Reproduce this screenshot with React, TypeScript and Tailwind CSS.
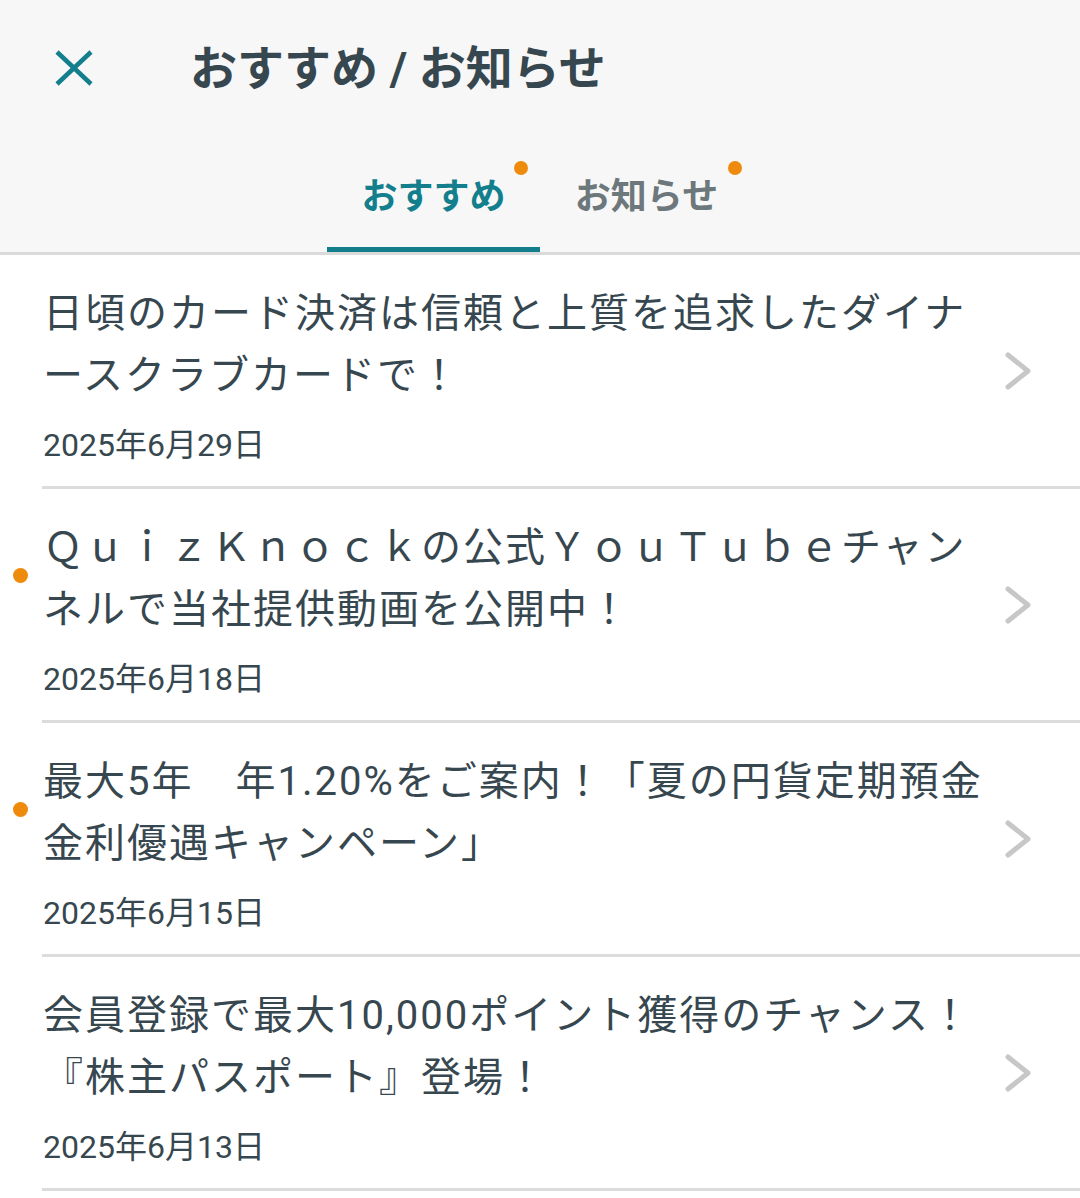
import React from "react";

const FONT = 'Roboto, "Noto Sans CJK JP", "Noto Sans", sans-serif';

type Item = { title: string; date: string; dot: boolean };

const items: Item[] = [
  { title: "日頃のカード決済は信頼と上質を追求したダイナースクラブカードで！", date: "2025年6月29日", dot: false },
  { title: "ＱｕｉｚＫｎｏｃｋの公式ＹｏｕＴｕｂｅチャンネルで当社提供動画を公開中！", date: "2025年6月18日", dot: true },
  { title: "最大5年　年1.20%をご案内！「夏の円貨定期預金金利優遇キャンペーン」", date: "2025年6月15日", dot: true },
  { title: "会員登録で最大10,000ポイント獲得のチャンス！『株主パスポート』登場！", date: "2025年6月13日", dot: false },
];

function Chevron() {
  return (
    <svg width="28" height="40" viewBox="0 0 28 40" className="shrink-0">
      <path d="M4 4 L24 20 L4 36" fill="none" stroke="#c7c7c7" strokeWidth="5" strokeLinecap="round" strokeLinejoin="round" />
    </svg>
  );
}

export default function App() {
  return (
    <div className="w-[1080px] min-h-[1198px] bg-white text-[#37474f]" style={{ fontFamily: FONT }}>
      <header className="bg-[#f7f7f7] border-b-[3px] border-[#dadada]">
        <div className="h-[136px] flex items-center">
          <div className="pl-[55px] w-[190px]">
            <svg width="38" height="36" viewBox="0 0 38 36">
              <path d="M2 2 L36 34 M36 2 L2 34" stroke="#137f8d" strokeWidth="4.5" fill="none" />
            </svg>
          </div>
          <h1 className="text-[47px] font-bold leading-none text-[#37474f]">おすすめ / お知らせ</h1>
        </div>
        <div className="flex justify-center h-[116px]">
          <div className="w-[213px] relative flex justify-center pt-[36px]">
            <span className="relative text-[36px] leading-[50px] font-bold text-[#137f8d] h-[50px]">
              おすすめ
              <span className="absolute -right-[22px] -top-[11px] w-[14px] h-[14px] rounded-full bg-[#ef8b0c]" />
            </span>
            <div className="absolute left-0 right-0 bottom-0 h-[5px] bg-[#137f8d]" />
          </div>
          <div className="w-[213px] relative flex justify-center pt-[36px]">
            <span className="relative text-[36px] leading-[50px] font-bold text-[#6c787b] h-[50px]">
              お知らせ
              <span className="absolute -right-[24px] -top-[11px] w-[14px] h-[14px] rounded-full bg-[#ef8b0c]" />
            </span>
          </div>
        </div>
      </header>
      <ul>
        {items.map((it, i) => (
          <li key={i} className="ml-[42px] border-b-[3px] border-[#dcdcdc] flex items-center pr-[48px]">
            <div className="w-[946px] pl-px pt-[28px] pb-[21px]">
              <div className="relative">
                {it.dot && (
                  <span className="absolute -left-[30px] top-[51px] w-[15px] h-[15px] rounded-full bg-[#ef8b0c]" />
                )}
                <p className="text-[40px] leading-[62px] tracking-[2px] text-[#37474f]">{it.title}</p>
              </div>
              <p className="mt-[18px] text-[32px] leading-[40px] text-[#37474f]">{it.date}</p>
            </div>
            <div className="ml-auto">
              <Chevron />
            </div>
          </li>
        ))}
      </ul>
    </div>
  );
}
